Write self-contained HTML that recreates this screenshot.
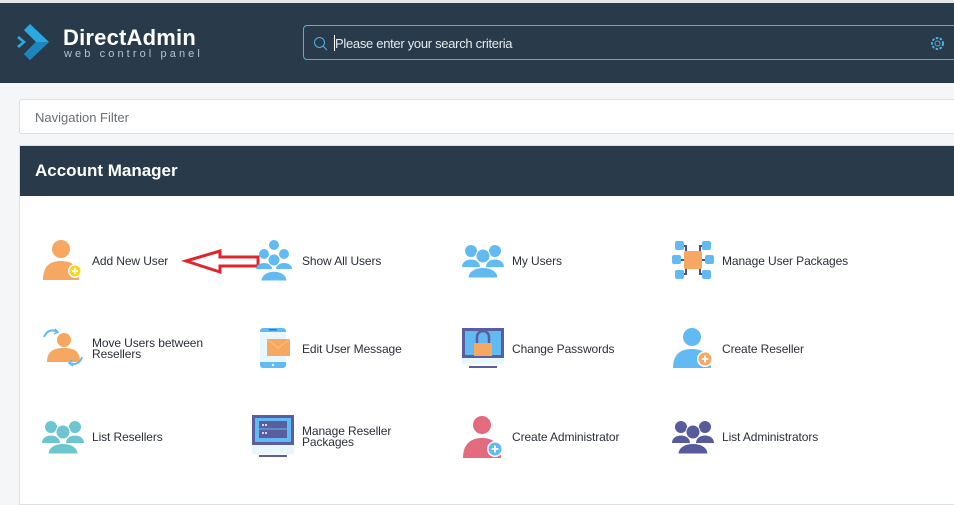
<!DOCTYPE html>
<html><head><style>
*{margin:0;padding:0;box-sizing:border-box}
body{width:954px;height:489px;overflow:hidden;background:#f5f6f8;font-family:"Liberation Sans",sans-serif;position:relative}
.top{position:absolute;left:0;top:0;width:954px;height:3px;background:#e4e6e9}
.hdr{position:absolute;left:0;top:3px;width:954px;height:80px;background:#293a4a}
.brand{position:absolute;left:63px;top:22px;color:#fff;font-size:22px;font-weight:bold;letter-spacing:0.2px}
.sub{position:absolute;left:64px;top:45px;color:#b8c2cc;font-size:11px;letter-spacing:3.1px}
.search{position:absolute;left:303px;top:22px;width:660px;height:35px;border:1px solid #4ab3e3;border-radius:4px}
.search span{position:absolute;left:31px;top:10px;color:#e6ebef;font-size:13px;letter-spacing:-0.3px}
.nf{position:absolute;left:19px;top:99px;width:950px;height:35px;background:#fff;border:1px solid #dcdfe3;border-radius:3px}
.nf span{position:absolute;left:15px;top:10px;color:#6a6f75;font-size:13px}
.card{position:absolute;left:19px;top:145px;width:950px;height:360px;background:#fff;border:1px solid #dcdfe3}
.ch{height:50px;background:#293a4a;color:#fff;font-weight:bold;font-size:17px;padding:15px 0 0 15px}
.it{position:absolute;font-size:12px;color:#2b2f3a;line-height:11px;letter-spacing:-0.1px}
svg.ic{position:absolute}
</style></head><body>
<div class="top"></div>
<div class="hdr">
<svg style="position:absolute;left:17px;top:18px" width="40" height="44" viewBox="0 0 40 44"><path d="M13 3 L32 21 L13 39 L7 33 L19 21 L7 9Z" fill="#2aa9e0"/><path d="M2 15 L9 21 L2 27 L0 25 L5 21 L0 17Z" fill="#2aa9e0"/><path d="M19 21 L32 21 L13 39 L7 33Z" fill="#1b86c0"/></svg>
<div class="brand">DirectAdmin</div>
<div class="sub">web control panel</div>
<div class="search"><svg style="position:absolute;left:9px;top:10px" width="15" height="15"><circle cx="6.5" cy="6.5" r="5" stroke="#4ab3e3" fill="none"/><path d="M10 10 L14 14" stroke="#4ab3e3"/></svg>
<div style="position:absolute;left:30px;top:9px;width:1px;height:16px;background:#fff"></div><span>Please enter your search criteria</span>
<svg style="position:absolute;left:626px;top:10px" width="15" height="15"><circle cx="7.5" cy="7.5" r="5.5" stroke="#4ab3e3" fill="none" stroke-dasharray="2.5 1.5" stroke-width="2"/><circle cx="7.5" cy="7.5" r="2.5" stroke="#4ab3e3" fill="none"/></svg></div>
</div>
<div class="nf"><span>Navigation Filter</span></div>
<div class="card"><div class="ch">Account Manager</div></div>

<!-- row 1 -->
<svg class="ic" style="left:41px;top:239px" width="44" height="42"><circle cx="20" cy="10" r="9" fill="#f6a762"/><path d="M2 41 C2 26 10 22 20 22 C30 22 38 26 38 41Z" fill="#f6a762"/><circle cx="34" cy="32" r="7" fill="#fff"/><circle cx="34" cy="32" r="5.5" fill="#f9d423"/><path d="M31 32h6M34 29v6" stroke="#fff" stroke-width="1.6"/></svg>
<div class="it" style="left:92px;top:256px">Add New User</div>
<svg class="ic" style="left:180px;top:248px" width="80" height="28"><path d="M78 9 L40 9 L40 3 L6 13 L40 24 L40 18 L78 18Z" fill="none" stroke="#e0262b" stroke-width="3"/></svg>
<svg class="ic" style="left:254px;top:239px" width="40" height="42"><circle cx="20" cy="6" r="5" fill="#62baf3"/><circle cx="10" cy="15" r="5" fill="#62baf3"/><circle cx="30" cy="15" r="5" fill="#62baf3"/><path d="M2 30 C2 22 18 22 18 30Z M22 30 C22 22 38 22 38 30Z" fill="#62baf3"/><circle cx="20" cy="21" r="6" fill="#62baf3" stroke="#fff"/><path d="M7 42 C7 29 33 29 33 42Z" fill="#62baf3" stroke="#fff"/></svg>
<div class="it" style="left:302px;top:256px">Show All Users</div>
<svg class="ic" style="left:462px;top:242px" width="42" height="36"><circle cx="9" cy="9" r="6" fill="#62baf3"/><circle cx="33" cy="9" r="6" fill="#62baf3"/><path d="M0 25 C0 15 18 15 18 25Z M24 25 C24 15 42 15 42 25Z" fill="#62baf3"/><circle cx="21" cy="14" r="7" fill="#62baf3" stroke="#fff"/><path d="M6 36 C6 22 36 22 36 36Z" fill="#62baf3" stroke="#fff"/></svg>
<div class="it" style="left:512px;top:256px">My Users</div>
<svg class="ic" style="left:672px;top:240px" width="42" height="40"><path d="M10 6 L14 6 L14 34 L10 34 M32 6 L28 6 L28 34 L32 34 M4 20 L38 20" stroke="#4b4f8f" stroke-width="2" fill="none"/><rect x="3" y="1" width="9" height="9" rx="2" fill="#62baf3"/><rect x="30" y="1" width="9" height="9" rx="2" fill="#62baf3"/><rect x="0" y="15" width="9" height="9" rx="2" fill="#62baf3"/><rect x="33" y="15" width="9" height="9" rx="2" fill="#62baf3"/><rect x="3" y="30" width="9" height="9" rx="2" fill="#62baf3"/><rect x="30" y="30" width="9" height="9" rx="2" fill="#62baf3"/><rect x="12" y="11" width="18" height="18" rx="2" fill="#f6a762"/></svg>
<div class="it" style="left:722px;top:256px">Manage User Packages</div>

<!-- row 2 -->
<svg class="ic" style="left:42px;top:327px" width="44" height="42"><path d="M2 10 C5 3 11 2 15 5" stroke="#62baf3" stroke-width="2" fill="none"/><path d="M13 2 L16 5 L12 7" stroke="#62baf3" stroke-width="1.5" fill="none"/><circle cx="22" cy="13" r="7" fill="#f6a762"/><path d="M5 35 C5 24 12 21 22 21 C32 21 38 24 38 35Z" fill="#f6a762"/><path d="M40 30 C38 37 32 38 28 36" stroke="#62baf3" stroke-width="2" fill="none"/><path d="M30 33 L27 36 L31 39" stroke="#62baf3" stroke-width="1.5" fill="none"/></svg>
<div class="it" style="left:92px;top:338px">Move Users between<br>Resellers</div>
<svg class="ic" style="left:258px;top:326px" width="34" height="44"><rect x="2" y="2" width="26" height="40" rx="3" fill="#62baf3"/><rect x="2" y="6" width="26" height="30" fill="#e8f6fd"/><rect x="11" y="3" width="8" height="1.5" fill="#2a7fc0"/><circle cx="15" cy="39" r="1.2" fill="#fff"/><rect x="9" y="13" width="23" height="17" fill="#f6a762"/><path d="M9 13 L20 22 L32 13" stroke="#f9bf86" fill="none"/></svg>
<div class="it" style="left:302px;top:344px">Edit User Message</div>
<svg class="ic" style="left:461px;top:327px" width="44" height="42"><rect x="1" y="1" width="42" height="30" fill="#5a5d9e"/><rect x="4" y="4" width="36" height="24" fill="#62baf3"/><rect x="1" y="31" width="42" height="6" fill="#e8f6fd"/><rect x="8" y="39" width="28" height="2" fill="#5a5d9e"/><path d="M16 16 V10 a6 6 0 0 1 12 0 V16" stroke="#5a5d9e" stroke-width="2.5" fill="none"/><rect x="13" y="16" width="18" height="13" fill="#f6a762"/></svg>
<div class="it" style="left:512px;top:344px">Change Passwords</div>
<svg class="ic" style="left:672px;top:327px" width="44" height="42"><circle cx="20" cy="10" r="9" fill="#62baf3"/><path d="M1 41 C1 26 10 22 20 22 C30 22 39 26 39 41Z" fill="#62baf3"/><circle cx="33" cy="32" r="8" fill="#fff"/><circle cx="33" cy="32" r="6.5" fill="#f6a762"/><path d="M29.5 32h7M33 28.5v7" stroke="#fff" stroke-width="1.8"/></svg>
<div class="it" style="left:722px;top:344px">Create Reseller</div>

<!-- row 3 -->
<svg class="ic" style="left:42px;top:418px" width="42" height="36"><circle cx="9" cy="9" r="6" fill="#6cc5cf"/><circle cx="33" cy="9" r="6" fill="#6cc5cf"/><path d="M0 25 C0 15 18 15 18 25Z M24 25 C24 15 42 15 42 25Z" fill="#6cc5cf"/><circle cx="21" cy="14" r="7" fill="#6cc5cf" stroke="#fff"/><path d="M6 36 C6 22 36 22 36 36Z" fill="#6cc5cf" stroke="#fff"/></svg>
<div class="it" style="left:92px;top:432px">List Resellers</div>
<svg class="ic" style="left:251px;top:414px" width="44" height="44"><rect x="1" y="1" width="42" height="30" fill="#5a5d9e"/><rect x="4" y="4" width="36" height="24" fill="#62baf3"/><rect x="8" y="7" width="28" height="17" fill="#5a5d9e"/><path d="M8 15h28" stroke="#62baf3"/><circle cx="12" cy="11" r="1" fill="#fff"/><circle cx="15" cy="11" r="1" fill="#fff"/><circle cx="12" cy="19" r="1" fill="#fff"/><circle cx="15" cy="19" r="1" fill="#fff"/><rect x="1" y="31" width="42" height="9" fill="#e8f6fd"/><rect x="8" y="41" width="28" height="2" fill="#5a5d9e"/></svg>
<div class="it" style="left:302px;top:426px">Manage Reseller<br>Packages</div>
<svg class="ic" style="left:462px;top:415px" width="44" height="44"><circle cx="20" cy="10" r="9" fill="#e36b7e"/><path d="M1 43 C1 28 10 23 20 23 C30 23 39 28 39 43Z" fill="#e36b7e"/><circle cx="33" cy="34" r="8" fill="#fff"/><circle cx="33" cy="34" r="6.5" fill="#62baf3"/><path d="M29.5 34h7M33 30.5v7" stroke="#fff" stroke-width="1.8"/></svg>
<div class="it" style="left:512px;top:432px">Create Administrator</div>
<svg class="ic" style="left:672px;top:418px" width="42" height="36"><circle cx="9" cy="9" r="6" fill="#575a9b"/><circle cx="33" cy="9" r="6" fill="#575a9b"/><path d="M0 25 C0 15 18 15 18 25Z M24 25 C24 15 42 15 42 25Z" fill="#575a9b"/><circle cx="21" cy="14" r="7" fill="#575a9b" stroke="#fff"/><path d="M6 36 C6 22 36 22 36 36Z" fill="#575a9b" stroke="#fff"/></svg>
<div class="it" style="left:722px;top:432px">List Administrators</div>
</body></html>
